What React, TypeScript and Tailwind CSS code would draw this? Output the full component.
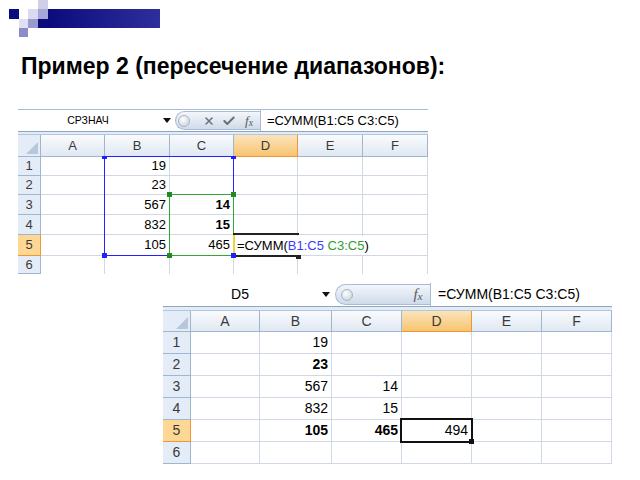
import React from "react";
import { X, Check } from "lucide-react";

const hdr =
  "flex items-center justify-center border-r border-b border-[#9eb6ce] bg-linear-to-b from-[#f9fbfd] to-[#e0e8f2] text-[#3a3a3a]";
const hdrSel =
  "flex items-center justify-center border-r border-b border-[#f29536] bg-linear-to-b from-[#fbe4bb] to-[#f7c470] text-[#3a3a3a]";
const rowHdr =
  "flex items-center justify-center border-r border-b border-[#9eb6ce] bg-[#e4ecf7] text-[#3a3a3a]";
const rowHdrSel =
  "flex items-center justify-center border-r border-b border-[#f29536] bg-[#fdd894] text-[#3a3a3a]";
const cell = "flex items-center justify-end pr-[3px] border-r border-b border-[#d0d7e5] text-black";
const cellLast = "flex items-center justify-end pr-[3px] border-r border-[#d0d7e5] text-black";

type V = { v: string; b?: boolean } | null;

const cols = ["A", "B", "C", "D", "E", "F"];

const data1: V[][] = [
  [null, { v: "19" }, null, null, null, null],
  [null, { v: "23" }, null, null, null, null],
  [null, { v: "567" }, { v: "14", b: true }, null, null, null],
  [null, { v: "832" }, { v: "15", b: true }, null, null, null],
  [null, { v: "105" }, { v: "465" }, null, null, null],
  [null, null, null, null, null, null],
];

const data2: V[][] = [
  [null, { v: "19" }, null, null, null, null],
  [null, { v: "23", b: true }, null, null, null, null],
  [null, { v: "567" }, { v: "14" }, null, null, null],
  [null, { v: "832" }, { v: "15" }, null, null, null],
  [null, { v: "105", b: true }, { v: "465", b: true }, { v: "494" }, null, null],
  [null, null, null, null, null, null],
];

function Corner() {
  return (
    <div className="relative border-r border-b border-[#9eb6ce] bg-[#e4ecf7] flex items-end justify-end p-[2px]">
      <svg width="12" height="12" viewBox="0 0 12 12">
        <polygon points="12,0 12,12 0,12" fill="#b6c7dc" />
      </svg>
    </div>
  );
}

function Arrow() {
  return (
    <svg width="8" height="5" viewBox="0 0 8 5">
      <polygon points="0,0 8,0 4,5" fill="#111" />
    </svg>
  );
}

function Ball() {
  return (
    <div className="w-[12px] h-[12px] rounded-full border border-[#aab6c6] bg-[radial-gradient(circle_at_40%_35%,#ffffff,#c2cbd7)]" />
  );
}

function Fx({ size }: { size: string }) {
  return (
    <span className={`font-['Liberation_Serif',serif] italic text-[#5a5a5a] ${size}`}>
      f<span className="text-[0.75em] relative top-[1px]">x</span>
    </span>
  );
}

function Grid({ data, big, last }: { data: V[][]; big: boolean; last: boolean }) {
  const gridCls = big
    ? "grid grid-cols-[28px_69px_72px_70px_70px_70px_70px] grid-rows-[21px_22px_22px_22px_22px_22px_22px] text-[14px]"
    : "grid grid-cols-[23px_64px_65px_64px_64px_65px_65px] grid-rows-[22px_19px_19px_20px_20px_21px_18px] text-[13px]";
  return (
    <div className={gridCls}>
      <Corner />
      {cols.map((c) => (
        <div key={c} className={c === "D" ? hdrSel : hdr}>
          {c}
        </div>
      ))}
      {data.map((row, r) => (
        <React.Fragment key={r}>
          <div className={r === 4 ? rowHdrSel : rowHdr}>{r + 1}</div>
          {row.map((v, c) => (
            <div key={c} className={r === 5 && !last ? cellLast : cell}>
              {v ? <span className={v.b ? "font-bold" : ""}>{v.v}</span> : null}
            </div>
          ))}
        </React.Fragment>
      ))}
    </div>
  );
}

function Sheet1() {
  return (
    <div className="w-[410px] font-['Liberation_Sans',Arial,sans-serif]">
      <div className="flex h-[23px] border-t border-b border-t-[#a7bbd5] border-b-[#8ea6c6] bg-white">
        <div className="w-[140px] flex items-center justify-center text-[10.5px] text-black">СРЗНАЧ</div>
        <div className="w-[17px] flex items-center justify-center">
          <Arrow />
        </div>
        <div className="w-[85px] my-[1px] flex items-center rounded-l-full border border-r-0 border-[#a9bcd6] bg-linear-to-b from-[#f3f6fb] to-[#cfdbea]">
          <div className="ml-[2px] w-[12px] flex justify-center">
            <Ball />
          </div>
          <div className="ml-[11px] w-[16px] flex justify-center">
            <X size={12} strokeWidth={3} color="#6f6f6f" />
          </div>
          <div className="ml-[4px] w-[16px] flex justify-center">
            <Check size={14} strokeWidth={3.5} color="#6f6f6f" />
          </div>
          <div className="ml-[3px] w-[18px] flex justify-center">
            <Fx size="text-[13px]" />
          </div>
        </div>
        <div className="flex-1 flex items-center pl-[6px] border-l border-[#a9bcd6] text-[13px] text-black">
          =СУММ(B1:C5 C3:C5)
        </div>
      </div>
      <div className="h-[2px] bg-[#e3ebf5]" />
      <div className="relative border-t border-[#b3c6dc]">
        <Grid data={data1} big={false} last={false} />
        {/* blue range B1:C5 */}
        <div className="absolute left-[86px] top-[21px] w-[130px] h-[100px] border border-[#2222ff]" />
        {/* green range C3:C5 */}
        <div className="absolute left-[151px] top-[59px] w-[65px] h-[62px] border border-[#35a535]" />
        <div className="absolute left-[149px] top-[57px] w-[5px] h-[5px] bg-[#1f8a1f]" />
        <div className="absolute left-[213px] top-[57px] w-[5px] h-[5px] bg-[#1f8a1f]" />
        <div className="absolute left-[149px] top-[118px] w-[5px] h-[5px] bg-[#1f8a1f]" />
        <div className="absolute left-[84px] top-[21px] w-[5px] h-[3px] bg-[#1f1fff]" />
        <div className="absolute left-[213px] top-[21px] w-[5px] h-[3px] bg-[#1f1fff]" />
        <div className="absolute left-[84px] top-[118px] w-[5px] h-[5px] bg-[#1f1fff]" />
        {/* editing cell D5 */}
        <div className="absolute left-[216px] top-[101px] h-[19px] w-[134px] bg-white flex items-center pl-[3px] text-[13px] text-black whitespace-nowrap">
          =СУММ(<span className="text-[#3b3bff]">B1:C5</span>&nbsp;<span className="text-[#2f9e2f]">C3:C5</span>)
        </div>
        <div className="absolute left-[215px] top-[98px] w-[66px] h-[2px] bg-[#222]" />
        <div className="absolute left-[215px] top-[120px] w-[66px] h-[2px] bg-[#222]" />
        <div className="absolute left-[215px] top-[100px] w-[2px] h-[20px] bg-[#f2d23a]" />
        <div className="absolute left-[278px] top-[120px] w-[5px] h-[4px] bg-[#222]" />
        <div className="absolute left-[213px] top-[118px] w-[5px] h-[5px] bg-[#1f1fff]" />
      </div>
    </div>
  );
}

function Sheet2() {
  return (
    <div className="w-[449px] font-['Liberation_Sans',Arial,sans-serif]">
      <div className="flex h-[24px] border-b border-[#8ea6c6] bg-white">
        <div className="w-[154px] flex items-center justify-center text-[14px] text-black">D5</div>
        <div className="w-[18px] flex items-center justify-center">
          <Arrow />
        </div>
        <div className="w-[95px] my-[1px] flex items-center rounded-l-full border border-r-0 border-[#a9bcd6] bg-linear-to-b from-[#f3f6fb] to-[#cfdbea]">
          <div className="ml-[4px] w-[13px] flex justify-center">
            <Ball />
          </div>
          <div className="ml-[55px] w-[20px] flex justify-center">
            <Fx size="text-[15px]" />
          </div>
        </div>
        <div className="flex-1 flex items-center pl-[7px] border-l border-[#a9bcd6] text-[14px] text-black">
          =СУММ(B1:C5 C3:C5)
        </div>
      </div>
      <div className="h-[3px] bg-[#e3ebf5]" />
      <div className="relative border-t border-[#b3c6dc]">
        <Grid data={data2} big={true} last={true} />
        <div className="absolute left-[237px] top-[107px] w-[73px] h-[25px] border-2 border-[#111]" />
        <div className="absolute left-[306px] top-[128px] w-[5px] h-[5px] bg-[#111]" />
      </div>
    </div>
  );
}

function Decor() {
  return (
    <svg width="160" height="40" viewBox="0 0 160 40" className="block">
      <defs>
        <linearGradient id="bar" x1="0" x2="1" y1="0" y2="0">
          <stop offset="0" stopColor="#0b0b7c" />
          <stop offset="1" stopColor="#2e2e9c" />
        </linearGradient>
      </defs>
      <rect x="38" y="0" width="10" height="9" fill="#cfcfea" />
      <rect x="9" y="9" width="10" height="10" fill="#0c0c7e" />
      <rect x="28" y="9" width="10" height="10" fill="#dadaf0" />
      <rect x="38" y="9" width="10" height="10" fill="#a6a6d8" />
      <rect x="48" y="9" width="112" height="19" fill="url(#bar)" />
      <rect x="38" y="19" width="10" height="9" fill="#0c0c7e" />
      <rect x="19" y="19" width="9" height="9" fill="#e0e0f2" />
      <rect x="28" y="19" width="10" height="9" fill="#9a9ad0" />
      <rect x="19" y="28" width="9" height="9" fill="#8c8cc8" />
    </svg>
  );
}

export default function App() {
  return (
    <div className="w-[640px] h-[480px] bg-white overflow-hidden font-['Liberation_Sans',Arial,sans-serif]">
      <Decor />
      <h1 className="mt-[12px] ml-[21px] text-[23px] leading-[28px] font-bold text-black whitespace-nowrap">
        Пример 2 (пересечение диапазонов):
      </h1>
      <div className="mt-[29px] ml-[18px]">
        <Sheet1 />
      </div>
      <div className="mt-[9px] ml-[163px]">
        <Sheet2 />
      </div>
    </div>
  );
}
